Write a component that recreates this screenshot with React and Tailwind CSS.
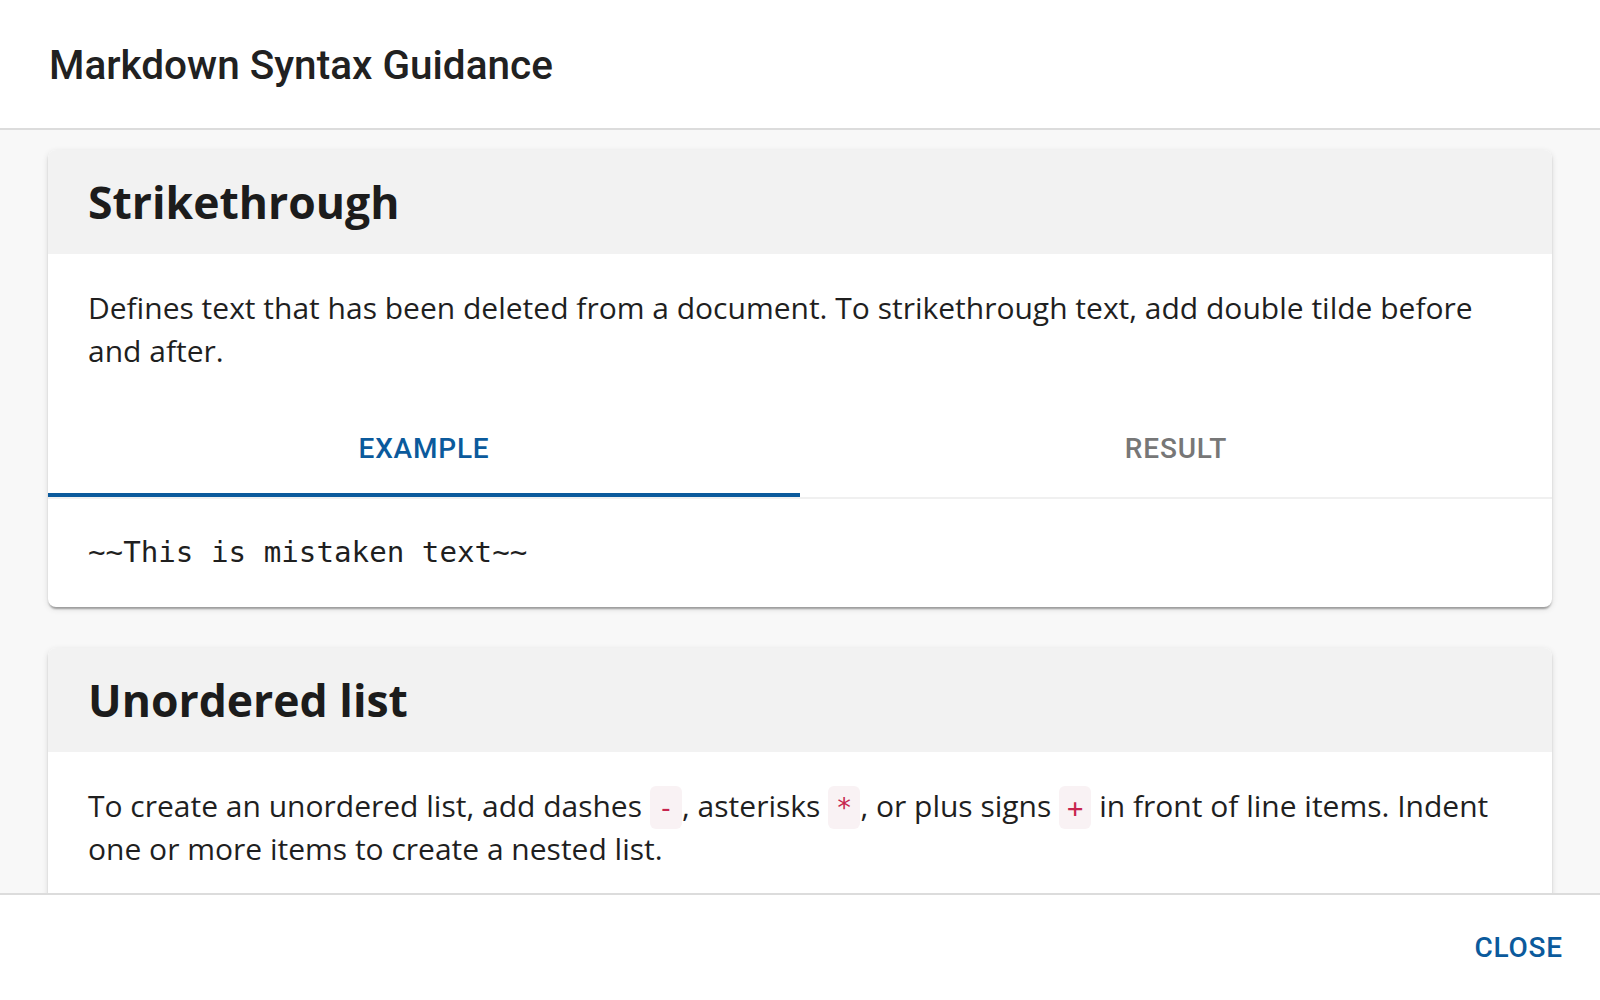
import React, { useState } from 'react';

const sections = [
    {
        title: 'Strikethrough',
        body: ['Defines text that has been deleted from a document. To strikethrough text, add double tilde before and after.'],
        example: '~~This is mistaken text~~',
        result: 'This is mistaken text',
    },
    {
        title: 'Unordered list',
        body: [
            'To create an unordered list, add dashes ',
            { code: '-' },
            ', asterisks ',
            { code: '*' },
            ', or plus signs ',
            { code: '+' },
            ' in front of line items. Indent one or more items to create a nested list.',
        ],
        example: '- First item\n- Second item\n- Third item',
        result: 'First item',
    },
];

function InlineCode({ children }) {
    return (
        <code className="rounded-[6px] bg-[#f9f2f4] px-[8px] py-[6px] font-['DejaVu_Sans_Mono',monospace] text-[27px] leading-none text-[#c7254e]">
            {children}
        </code>
    );
}

function SyntaxCard({ section }) {
    const [tab, setTab] = useState('example');

    return (
        <div className="shrink-0 overflow-hidden rounded-[8px] bg-white shadow-[0_4px_2px_-2px_rgba(0,0,0,0.2),0_2px_2px_0_rgba(0,0,0,0.14),0_2px_6px_0_rgba(0,0,0,0.12)]">
            {/* Card header */}
            <div className="flex h-[104px] items-center bg-[#f2f2f2] px-[40px]">
                <h2 className="font-['Open_Sans',sans-serif] text-[44.5px] font-bold text-[#1c1c1c]">{section.title}</h2>
            </div>

            {/* Description */}
            <p className="px-[40px] pt-[32px] font-['Open_Sans',sans-serif] text-[30px] leading-[43px] text-[#1f1f1f]">
                {section.body.map((part, i) =>
                    typeof part === 'string' ? <span key={i}>{part}</span> : <InlineCode key={i}>{part.code}</InlineCode>
                )}
            </p>

            {/* Tabs */}
            <div className="mt-[29px] flex border-b-2 border-[#f0f0f0]">
                {['example', 'result'].map((t) => (
                    <button
                        key={t}
                        onClick={() => setTab(t)}
                        className={`flex h-[96px] flex-1 items-center justify-center border-b-4 pt-[4px] font-['Roboto',sans-serif] text-[28px] font-medium uppercase tracking-[0.8px] ${
                            tab === t ? 'border-[#0b5a9c] text-[#0b5a9c]' : 'border-transparent text-[#777777]'
                        }`}
                    >
                        {t}
                    </button>
                ))}
            </div>

            {/* Tab panel */}
            <div className="flex h-[108px] items-center px-[40px]">
                {tab === 'example' ? (
                    <pre className="font-['DejaVu_Sans_Mono',monospace] text-[29.2px] text-[#1f1f1f]">{section.example}</pre>
                ) : (
                    <span className="font-['Open_Sans',sans-serif] text-[30px] text-[#1f1f1f] line-through">{section.result}</span>
                )}
            </div>
        </div>
    );
}

export default function App() {
    return (
        <div className="flex h-screen w-full flex-col bg-white">
            {/* Dialog title */}
            <div className="flex h-[130px] shrink-0 items-center border-b-2 border-[#dcdcdc] px-[49px] pt-[2px]">
                <h1 className="font-['Roboto',sans-serif] text-[40.5px] font-medium text-[#212121]">Markdown Syntax Guidance</h1>
            </div>

            {/* Scrollable content */}
            <div className="flex min-h-0 flex-1 flex-col gap-[41px] overflow-hidden bg-[#f8f8f8] px-[48px] pt-[20px]">
                {sections.map((s) => (
                    <SyntaxCard key={s.title} section={s} />
                ))}
            </div>

            {/* Actions */}
            <div className="flex h-[107px] shrink-0 items-center justify-end border-t-2 border-[#dcdcdc] px-[37px]">
                <button className="font-['Roboto',sans-serif] text-[28px] font-medium uppercase tracking-[0.8px] text-[#0b5a9c]">
                    Close
                </button>
            </div>
        </div>
    );
}
